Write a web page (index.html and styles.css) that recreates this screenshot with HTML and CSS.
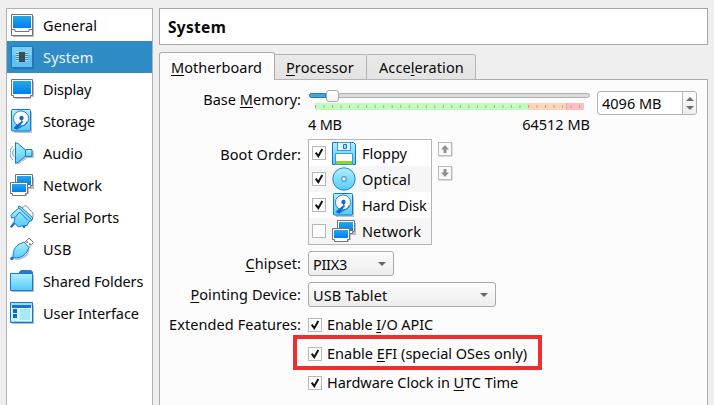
FILE: index.html
```html
<!DOCTYPE html>
<html lang="en">
<head>
<meta charset="utf-8">
<title>System settings</title>
<link rel="stylesheet" href="styles.css">
</head>
<body>
<svg class="defs" width="0" height="0" aria-hidden="true">
  <defs>
    <linearGradient id="screen" x1="0" y1="0" x2="0" y2="1"><stop offset="0" stop-color="#24a9e4"/><stop offset="1" stop-color="#007cf8"/></linearGradient>
    <linearGradient id="aqua" x1="0" y1="0" x2="0" y2="1"><stop offset="0" stop-color="#b0f0ff"/><stop offset="1" stop-color="#52ccfb"/></linearGradient>
    <symbol id="i-general" viewBox="0 0 24 24">
      <path d="M3 3H24V24H3z" fill="#bbb"/>
      <path d="M1.5 1.5h21v21h-21z" fill="#fff" stroke="#737373"/>
      <path d="M3 3h18v12H3z" fill="url(#screen)"/>
      <path d="M2 16.5h3v2h14v-2h3" fill="none" stroke="#737373"/>
    </symbol>
    <symbol id="i-system" viewBox="0 0 24 24">
      <path d="M3 3H24V24H3z" fill="#2476ae"/>
      <path d="M1.5 1.5h21v21h-21z" fill="#61c1ed" stroke="#1b77cb"/>
      <path d="M2 2h20v8H2z" fill="#7ccff0"/>
      <path d="M6 7.5h12M6 9.5h12M6 11.5h12M6 13.5h12M6 15.5h12" stroke="#b7dcec"/>
      <path d="M6 8.5h12M6 10.5h12M6 12.5h12M6 14.5h12" stroke="#507e9b"/>
      <path d="M9 7h6v10H9z" fill="#304e64"/>
    </symbol>
    <symbol id="i-display" viewBox="0 0 24 24">
      <path d="M3 4H24V20H21V22H5V19H3z" fill="#bbb"/>
      <path d="M1.5 2.5h21v16h-2v2h-17v-2h-2z" fill="#fff" stroke="#737373"/>
      <path d="M3 4h18v13H3z" fill="url(#screen)"/>
    </symbol>
    <symbol id="i-disk" viewBox="0 0 24 24">
      <path d="M4 3h18v21H4z" fill="#b9c4cc"/>
      <rect x="1.5" y=".5" width="19" height="21.500" rx="1" fill="url(#aqua)" stroke="#1976d0"/>
      <circle cx="11" cy="9.500" r="7.600" fill="#fff" stroke="#2b7fce"/>
      <path d="M13.300 12L7.500 20.700 3.600 19.300 5 17.500 10.500 13z" fill="#1268cd"/>
      <path d="M8.500 19.500l3-2.500c3.200-.500 5-2 5.500-4.500" fill="none" stroke="#1976d0" stroke-width="1.200"/>
      <circle cx="11.500" cy="9" r="2.200" fill="#126bd0"/>
      <path d="M11.500 9l.5 5" stroke="#1268cd" stroke-width="1"/>
    </symbol>
    <symbol id="i-audio" viewBox="0 0 24 24">
      <path d="M7 3l11 7h6v7h-6L7 24z" fill="#c3c3c8"/>
      <path d="M15.500 8.500h6.500v7h-6.500z" fill="url(#aqua)" stroke="#1976d0"/>
      <path d="M5.500 1.500l3 1.500 7 6v6l-7 6-3 1.500z" fill="url(#aqua)" stroke="#1976d0"/>
      <path d="M4.500 8c-2.300 1.800-2.300 6.200 0 8M3 5.200C-1 8-1 16 3 18.800" fill="none" stroke="#6098d6"/>
    </symbol>
    <symbol id="i-network" viewBox="0 0 24 24">
      <path d="M8 4h16v12h-5v5h-2v2H4v-2H2z" fill="#bbb"/>
      <path d="M5.500 1.500h17v11h-2v2h-15z" fill="#fff" stroke="#737373"/>
      <path d="M7 3h14v9H7z" fill="url(#screen)"/>
      <path d="M.500 9.500h17v11h-2v2h-13v-2h-2z" fill="#fff" stroke="#737373"/>
      <path d="M2 11h14v8H2z" fill="url(#screen)"/>
    </symbol>
    <symbol id="i-serial" viewBox="0 0 24 24">
      <path d="M12 3l2.500-2h2L23 8v4l-2 2z" fill="#fff" stroke="#8a8a8a"/>
      <path d="M4 18.500L1.500 21.500M14 19v3" stroke="#1976d0" stroke-width="2.500" stroke-linecap="round"/>
      <path d="M1 10.500l2-2.500 6.500-5.500L22 14v1.500l-3 1-2 4-5.500.500-3 1-4.500-4.500L5 12.500l-3.500.500z" fill="url(#aqua)" stroke="#1976d0" stroke-linejoin="round"/>
      <path d="M8 2l2-1 13 12-1.500 1.500z" fill="#9be5fc" stroke="#1976d0" stroke-linejoin="round"/>
      <path d="M5.500 12l4-5 8.500 8.500" fill="none" stroke="#1976d0"/>
    </symbol>
    <symbol id="i-usb" viewBox="0 0 24 24">
      <path d="M14 6l5-5 4.500 4.500-5 5.500z" fill="#fff" stroke="#858585"/>
      <path d="M16.500 4.500H18V6h-1.500zM19 6.500h1.500V8H19z" fill="#555"/>
      <path d="M5 22c7 1 14-4 14-10" fill="none" stroke="#bbc" stroke-width="1.500"/>
      <path d="M3 20.500C3 16 3.500 8.500 12 6l2-1 5 5.500-1 2C16 19 9 22 3 20.500z" fill="url(#aqua)" stroke="#1976d0"/>
      <circle cx="2" cy="21.500" r="1.800" fill="#1976d0"/>
    </symbol>
    <symbol id="i-folder" viewBox="0 0 24 24">
      <path d="M2 6H24V23H2z" fill="#bfb9bd"/>
      <path d="M9 3l2-2h10l2 2v3H9z" fill="#2f76cf"/>
      <path d="M.500 4.500h22v17H.500z" fill="url(#aqua)" stroke="#1976d0"/>
    </symbol>
    <symbol id="i-ui" viewBox="0 0 24 24">
      <path d="M2 4H24V23H2z" fill="#bfb9bd"/>
      <path d="M.500 1.500h22v20H.500z" fill="#d9f6ff" stroke="#1976d0"/>
      <path d="M1 2h21v3H1z" fill="#8fe2fb"/>
      <path d="M2 4h19v3H2z" fill="#2670cc"/>
      <path d="M3 8h4v4H3zM3 13h4v4H3z" fill="#0a66d0"/>
      <path d="M10 8h10v11H10z" fill="#a5e8fc"/>
      <path d="M1 20.500h21" stroke="#7bd9fa"/>
    </symbol>
    <symbol id="i-floppy" viewBox="0 0 24 24">
      <path d="M.500 1.500h21l2 2v20H.500z" fill="url(#aqua)" stroke="#1976d0"/>
      <path d="M5.500 1.500h13v8h-13z" fill="#e0f8ff" stroke="#3d98dd"/>
      <path d="M11.500 3.500h3v4h-3z" fill="#9be8fc" stroke="#1976d0"/>
      <path d="M3.500 12.500h17v11h-17z" fill="#fff" stroke="#3d98dd"/>
      <path d="M4 20h16v3H4z" fill="#83dc20"/>
    </symbol>
    <symbol id="i-optical" viewBox="0 0 24 24">
      <circle cx="12" cy="12" r="11.200" fill="url(#aqua)" stroke="#2a82d2"/>
      <circle cx="12" cy="12" r="2.300" fill="#fff" stroke="#5b97c2" stroke-width="1.300"/>
    </symbol>
    <symbol id="i-check" viewBox="0 0 14 14"><path d="M3.700 6.700l2.600 3.500 4-7.200" fill="none" stroke="#111" stroke-width="2"/></symbol>
    <symbol id="i-up" viewBox="0 0 14 14"><path d="M7 3l4 4.500H8.500V11h-3V7.500H3z" fill="#96918d"/></symbol>
    <symbol id="i-down" viewBox="0 0 14 14"><path d="M7 11l4-4.500H8.500V3h-3v3.500H3z" fill="#96918d"/></symbol>
  </defs>
</svg>
<div class="window">
  <nav class="sidebar">
    <a class="item general"><svg><use href="#i-general"/></svg>General</a>
    <a class="item system selected"><svg><use href="#i-system"/></svg>System</a>
    <a class="item display"><svg><use href="#i-display"/></svg>Display</a>
    <a class="item storage"><svg><use href="#i-disk"/></svg>Storage</a>
    <a class="item audio"><svg><use href="#i-audio"/></svg>Audio</a>
    <a class="item network"><svg><use href="#i-network"/></svg>Network</a>
    <a class="item serial"><svg><use href="#i-serial"/></svg>Serial Ports</a>
    <a class="item usb"><svg><use href="#i-usb"/></svg>USB</a>
    <a class="item folders"><svg><use href="#i-folder"/></svg>Shared Folders</a>
    <a class="item interface"><svg><use href="#i-ui"/></svg>User Interface</a>
  </nav>
  <main class="main">
    <h1 class="title">System</h1>
    <div class="tabs">
      <div class="tab active"><span><u>M</u>otherboard</span></div>
      <div class="tab processor"><span><u>P</u>rocessor</span></div>
      <div class="tab acceleration"><span>Acce<u>l</u>eration</span></div>
      <div class="tab-rest"></div>
    </div>
    <section class="pane">
      <div class="row memory">
        <div class="label">Base <u>M</u>emory:</div>
        <div class="slider">
          <div class="track"><div class="filled"></div><div class="handle"></div></div>
          <svg class="scale" width="270" height="7" viewBox="0 0 270 7">
            <path d="M0 0h213v7H0z" fill="#c0fcbd"/>
            <path d="M213 0h38v7h-38z" fill="#fcd5bd"/>
            <path d="M251 0h18v7h-18z" fill="#fcc0c0"/>
            <path d="M0 3.500h269" stroke="#a7aaa4" stroke-width="3" stroke-dasharray="1 7.520"/>
            <path d="M251.500 0v7" stroke="#faa08f"/>
          </svg>
          <div class="limits"><span class="min">4 MB</span><span class="max">64512 MB</span></div>
        </div>
        <div class="spin"><span>4096 MB</span><div class="steps"><svg width="8" height="15" viewBox="0 0 8 15"><path d="M0 5l4-4 4 4zM0 10h8l-4 4z" fill="#6b6b6b"/></svg></div></div>
      </div>
      <div class="row boot">
        <div class="label">Boot Order:</div>
        <div class="list">
          <div class="entry"><span class="box"><svg><use href="#i-check"/></svg></span><svg class="icon"><use href="#i-floppy"/></svg><span>Floppy</span></div>
          <div class="entry optical"><span class="box"><svg><use href="#i-check"/></svg></span><svg class="icon"><use href="#i-optical"/></svg><span>Optical</span></div>
          <div class="entry hard-disk"><span class="box"><svg><use href="#i-check"/></svg></span><svg class="icon"><use href="#i-disk"/></svg><span>Hard Disk</span></div>
          <div class="entry net"><span class="box"></span><svg class="icon"><use href="#i-network"/></svg><span>Network</span></div>
        </div>
        <div class="movers"><div class="mover"><svg><use href="#i-up"/></svg></div><div class="mover"><svg><use href="#i-down"/></svg></div></div>
      </div>
      <div class="row combo-row chipset">
        <div class="label"><u>C</u>hipset:</div>
        <div class="combo"><span>PIIX3</span><i class="caret"></i></div>
      </div>
      <div class="row combo-row pointing">
        <div class="label"><u>P</u>ointing Device:</div>
        <div class="combo"><span>USB Tablet</span><i class="caret"></i></div>
      </div>
      <div class="row option apic">
        <div class="label">Extended Features:</div>
        <span class="box"><svg><use href="#i-check"/></svg></span><span class="text">Enable <u>I</u>/O APIC</span>
      </div>
      <div class="row option efi">
        <div class="label"></div>
        <span class="box"><svg><use href="#i-check"/></svg></span><span class="text">Enable <u>E</u>FI (special OSes only)</span>
        <div class="highlight"></div>
      </div>
      <div class="row option utc">
        <div class="label"></div>
        <span class="box"><svg><use href="#i-check"/></svg></span><span class="text">Hardware Clock in <u>U</u>TC Time</span>
      </div>
    </section>
  </main>
</div>
</body>
</html>
```
FILE: styles.css
```css
* { box-sizing: border-box; }
body {
  margin: 0;
  background: #efefef;
  color: #080808;
  font: 14.5px/20px "Noto Sans", "Open Sans", sans-serif;
  overflow: hidden;
}
.defs { position: absolute; }
svg { display: block; flex: none; }
u {
  text-decoration: underline 1px;
  text-underline-offset: 2px;
  text-decoration-skip-ink: none;
}
.window {
  display: flex;
  gap: 6px;
  height: 405px;
  padding: 8px 6px 0;
  overflow: hidden;
}

/* category list */
.sidebar {
  width: 147px;
  height: 410px;
  flex: none;
  background: #fff;
  border: 1px solid #b3b1b0;
}
.item {
  display: flex;
  align-items: center;
  gap: 9px;
  height: 32px;
  padding: 0 0 0 3px;
  white-space: nowrap;
}
.item svg { width: 24px; height: 24px; }
.selected { background: #308cc6; color: #eef6fb; }
.general { letter-spacing: .08px; }
.system { letter-spacing: .19px; }
.display { letter-spacing: -.19px; }
.storage, .serial, .folders { letter-spacing: -.1px; }
.network { letter-spacing: .1px; }
.usb { letter-spacing: .25px; }
.interface { letter-spacing: -.08px; }

/* page header and tabs */
.main { width: 549px; flex: none; }
.title {
  height: 37px;
  margin: 0 0 7px;
  padding: 0 8px;
  background: #fff;
  border: 1px solid #a6a6a6;
  font-size: 15.5px;
  line-height: 37px;
  letter-spacing: .3px;
}
.tabs { display: flex; height: 28px; align-items: flex-end; letter-spacing: .08px; }
.tab {
  height: 26px;
  display: flex;
  align-items: center;
  padding: 0 0 0 12px;
  background: linear-gradient(#e9e9e9, #e4e4e4);
  border: 1px solid #b5b5b5;
  border-left: 0;
  border-radius: 0 2px 0 0;
}
.tab.active {
  width: 116px;
  height: 28px;
  padding: 0 0 0 11px;
  letter-spacing: .03px;
  background: #fcfcfc;
  border: 1px solid #ababab;
  border-bottom: 0;
  border-radius: 3px 3px 0 0;
}
.processor { width: 92px; padding-left: 11px; }
.acceleration { width: 109px; }
.tab-rest { flex: 1; height: 1px; background: #ababab; }

/* settings form */
.pane {
  height: 340px;
  background: #fcfcfc;
  border: 1px solid #ababab;
  border-top: 0;
}
.row { display: flex; white-space: nowrap; }
.label { width: 141px; margin-right: 7px; text-align: right; flex: none; letter-spacing: .07px; }
.memory { height: 59px; padding-top: 10px; }
.memory .label { margin-top: -1px; letter-spacing: .03px; }
.slider { width: 282px; }
.track {
  display: flex;
  align-items: center;
  height: 5px;
  margin: 3px 0 0 1px;
  border: 1px solid #b0b0b0;
  border-radius: 3px;
  background: #dcdcdc;
}
.filled { width: 17px; height: 5px; margin-left: -1px; background: #45a4df; border: 1px solid #277eb6; border-radius: 3px 0 0 3px; }
.handle { width: 13px; height: 12px; background: linear-gradient(#fff, #f2f2f2); border: 1px solid #aaa; border-radius: 3px; flex: none; }
.scale { margin: 5px 0 0 7px; }
.limits { display: flex; justify-content: space-between; margin-top: 4px; }
.min { letter-spacing: -.2px; }
.spin {
  width: 100px;
  height: 24px;
  margin: 1px 0 0 7px;
  padding-left: 4px;
  display: flex;
  justify-content: space-between;
  align-items: center;
  background: #fff;
  border: 1px solid #b0b0b0;
  border-radius: 3px;
}
.steps {
  width: 14px;
  height: 22px;
  display: grid;
  place-items: center;
  background: linear-gradient(#fcfcfc, #efefef);
  border-left: 1px solid #b9b9b9;
  border-radius: 0 3px 3px 0;
}
.boot { height: 106px; }
.boot .label { padding-top: 5px; }
.list { width: 124px; border: 1px solid #b5b5b5; background: #fff; }
.entry { display: flex; align-items: center; height: 26px; padding-left: 3px; }
.entry:nth-child(even) { background: #f6f6f6; }
.box { width: 14px; height: 14px; flex: none; border: 1px solid #b8b8b8; background: #fff; }
.box svg { width: 14px; height: 14px; margin: -1px; }
.icon { width: 24px; height: 24px; margin: 0 6px; }
.optical { letter-spacing: .12px; }
.hard-disk { letter-spacing: -.2px; }
.net { letter-spacing: .1px; }
.movers { display: flex; flex-direction: column; gap: 10px; margin: 3px 0 0 6px; }
.mover { width: 14px; height: 14px; border: 1px solid #bbb; background: #fafafa; box-shadow: 1px 1px #ddd; }
.mover svg { width: 14px; height: 14px; margin: -1px; }
.combo-row { height: 25px; margin-top: 6px; }
.combo-row .label { padding-top: 2px; }
.combo {
  display: flex;
  align-items: center;
  justify-content: space-between;
  padding: 0 7px 0 4px;
  border: 1px solid #aaa;
  border-radius: 3px;
  background: linear-gradient(#fdfdfd, #ededed);
}
.chipset .combo { width: 86px; letter-spacing: -.3px; }
.pointing .combo { width: 188px; letter-spacing: .15px; }
.caret { border: 4px solid transparent; border-top-color: #666; border-bottom: 0; }
.option { height: 29px; align-items: center; position: relative; }
.option .label { margin-bottom: 2px; }
.apic { margin-top: 3px; }
.text { margin: 0 0 2px 5px; }
.apic .text { letter-spacing: -.08px; }
.utc .text { letter-spacing: -.04px; }
.highlight {
  position: absolute;
  left: 133px;
  top: -4px;
  width: 249px;
  height: 35px;
  border: 4px solid #ee2e31;
}
```
